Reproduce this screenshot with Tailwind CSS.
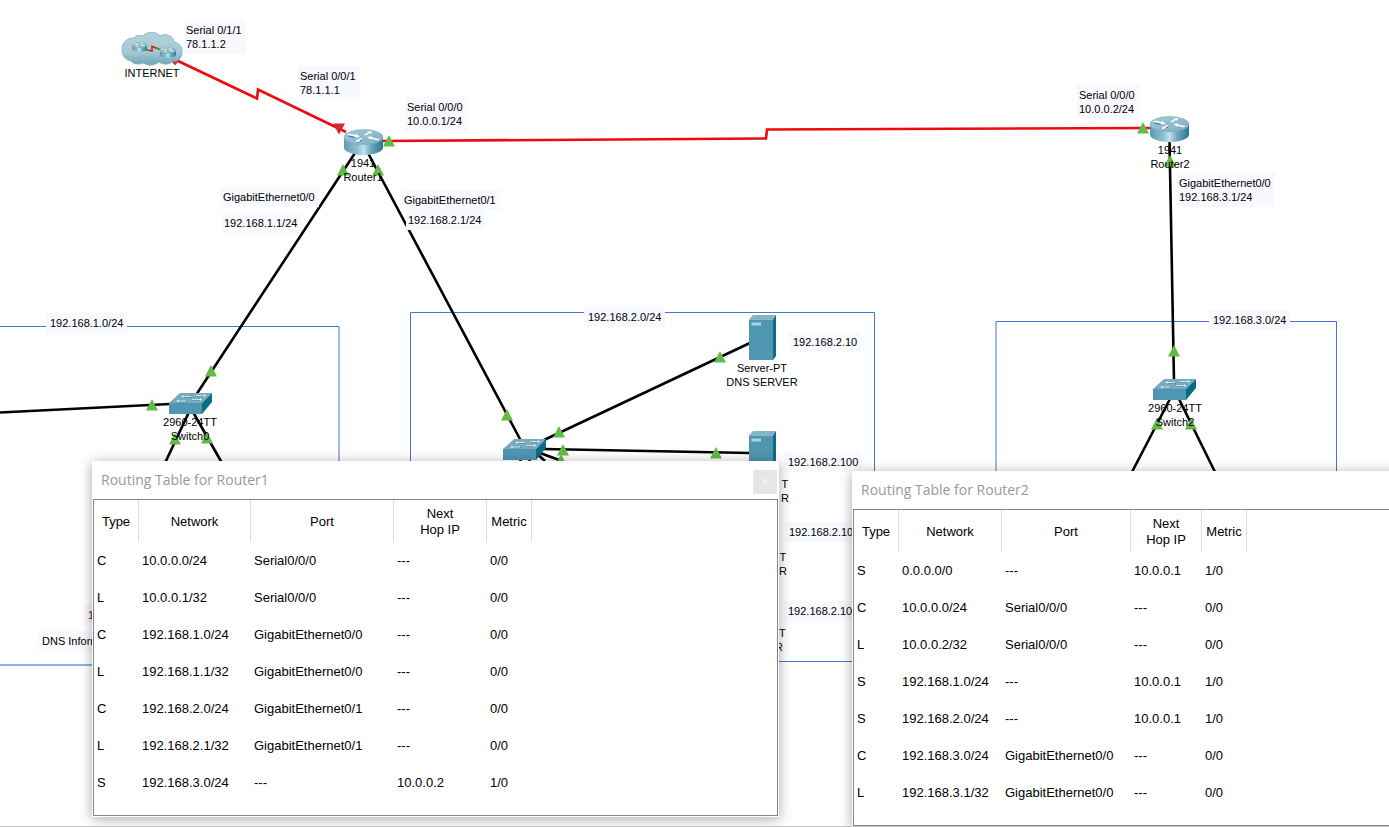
<!DOCTYPE html>
<html lang="en">
<head>
<meta charset="utf-8">
<title>Network topology</title>
<script src="https://cdn.jsdelivr.net/npm/@tailwindcss/browser@4"></script>
</head>
<body class="bg-white text-black font-['Liberation_Sans',Arial,sans-serif]">
<main class="relative h-screen w-full overflow-hidden border-b border-[#c4c4c4] text-[11px] leading-[14px] whitespace-nowrap">

  <svg class="absolute inset-0 h-full w-full" aria-hidden="true">
    <defs>
      <linearGradient id="side" x1="0" x2="1" y1="0" y2="0">
        <stop offset="0" stop-color="#5b9ab1"/><stop offset=".35" stop-color="#8fc0d0"/><stop offset=".5" stop-color="#c3e1e9"/><stop offset=".7" stop-color="#6ba6ba"/><stop offset="1" stop-color="#2c7690"/>
      </linearGradient>
      <linearGradient id="lid" x1="0" x2="1" y1="0" y2="1">
        <stop offset="0" stop-color="#a5cbd8"/><stop offset="1" stop-color="#7aaec0"/>
      </linearGradient>
      <linearGradient id="puff" x1="0" x2="0" y1="0" y2="1">
        <stop offset="0" stop-color="#b3d3dc"/><stop offset=".6" stop-color="#a3c9d4"/><stop offset="1" stop-color="#6fa5b7"/>
      </linearGradient>
      <symbol id="router" viewBox="0 0 40 27" overflow="visible">
        <path d="M0 8v11c0 4 9 7.500 20 7.500s20-3.500 20-7.500V8z" fill="url(#side)"/>
        <ellipse cx="20" cy="8" rx="20" ry="7.800" fill="url(#lid)" stroke="#79abbc" stroke-width=".6"/>
        <g fill="none" stroke="#2f7288" stroke-width="1" transform="translate(.6 .9)">
          <path d="M4 6l8 1.500M22 5l5-3M18 10l-5 2.500M36 10l-9-1.500"/>
        </g>
        <g fill="#fff">
          <path d="M3 5.500l2-1.200 7 1.400.6-1.200 3.600 3-5.400 1 .6-1.100z"/>
          <path d="M20.500 5.600l4.200-2.400-1.200-.6 5.400-1-1 3-1.200-.7-4 2.500z"/>
          <path d="M19 9.600l-3.200 2 1.200.7-5 .9.900-2.800 1.200.6 3-2z"/>
          <path d="M37 10.200l-2 1.200-7-1.600-.5 1-3.700-3 5.400-.8-.6 1z"/>
        </g>
      </symbol>
      <symbol id="switch" viewBox="0 0 43 21">
        <path d="M0 10L11 0h32L33 10z" fill="#78abbd"/>
        <path d="M0 10h33v11H0z" fill="#4f97b0"/>
        <path d="M33 10L43 0v9L33 21z" fill="#0b6c84"/>
        <g fill="none" stroke="#4d8aa1" stroke-width=".7"><path d="M14 4.500h9M9 8.800h10M28 3h8M23 7h9"/></g>
        <g fill="none" stroke="#e6f3f7" stroke-width=".8"><path d="M14 3.500h8M27 2.500h8M9 8h8M23 6.500h8"/></g>
        <path d="M12.500 3.500l2-1.300v2.600zM7.500 8l2-1.300v2.600zM37 2.500l-2-1.300v2.600zM33 6.500l-2-1.300v2.600z" fill="#fff"/>
      </symbol>
      <symbol id="server" viewBox="0 0 27 45">
        <path d="M0 4.500L4 0h23l-3 4.500z" fill="#83b5c5"/>
        <path d="M0 4.500h24V45H0z" fill="#4f97b0"/>
        <path d="M24 4.500L27 0v41l-3 4z" fill="#0b6c84"/>
        <path d="M2.500 7.500h9.500v3H2.500z" fill="#a9d4e2"/>
      </symbol>
      <path id="up" d="M0 -6L6 5.500H-6z" fill="#62bb46"/>
    </defs>

    <!-- subnet frames -->
    <g fill="none" stroke="#4377d6">
      <path d="M0 326.500H339V665"/>
      <path d="M0 665H339" stroke="#8caeea" stroke-width="2"/>
      <path d="M410.500 312.500H874.500V661.500H410.500z"/>
      <path d="M996 321.500H1336.500V661.500H996z"/>
    </g>

    <!-- copper links -->
    <g fill="none" stroke="#000" stroke-width="2.600">
      <path d="M355 153L196 395M368 153L521 441M0 412.500L170 404M189 412L165 463M193 412L222 463"/>
      <path d="M544 440L750 343M544 449L750 453M540 453L562 461M536 453L545 461M521 460L517 466M529 460L533 466"/>
      <path d="M1169.500 141L1174 381M1171 397L1132 472M1178 397L1215 472"/>
    </g>
    <!-- serial links -->
    <g fill="none" stroke="#ee0a0f" stroke-width="2.600">
      <path d="M176 60L257 98.500L258 89.500L346 132"/>
      <path d="M382 141L766 138.500L767 129.500L1151 128"/>
    </g>
    <path d="M333 123.500h12l-6 11zM170 59.500h10l-5 6z" fill="#cf2a36"/>
    <g>
      <use href="#up" x="389" y="141"/><use href="#up" x="343" y="170"/><use href="#up" x="378" y="170"/>
      <use href="#up" x="211" y="371"/><use href="#up" x="152" y="405"/><use href="#up" x="175" y="439"/><use href="#up" x="207" y="438"/>
      <use href="#up" x="507" y="415"/><use href="#up" x="559" y="432"/><use href="#up" x="561" y="460"/><use href="#up" x="563" y="450"/>
      <use href="#up" x="720" y="357"/><use href="#up" x="716" y="453"/>
      <use href="#up" x="1143" y="128"/><use href="#up" x="1170" y="161"/><use href="#up" x="1174" y="351"/>
      <use href="#up" x="1157" y="424"/><use href="#up" x="1191" y="424"/>
    </g>

    <!-- devices -->
    <use href="#router" x="344" y="129" width="39" height="27"/>
    <use href="#router" x="1150" y="116" width="39" height="27"/>
    <use href="#switch" x="169" y="393" width="43" height="21"/>
    <use href="#switch" x="503" y="439" width="43" height="21"/>
    <use href="#switch" x="1153" y="379" width="43" height="21"/>
    <use href="#server" x="749" y="315" width="27" height="45"/>
    <use href="#server" x="749" y="431" width="27" height="45"/>
    <path d="M131 61c-6-1-9-6-9-11c0-8 5-12 12-12c2-3 6-3 9-2c4-5 14-5 17 0c6-4 14 1 14 6c5 1 9 5 8 10c0 6-4 10-9 9c-3 4-10 4-14 1c-5 4-12 4-15 1c-6 2-11 1-13-2z" fill="url(#puff)" stroke="#7fb0c0" stroke-width=".8"/>
    <path d="M143 49l9 2v-4.500l8 3" fill="none" stroke="#f01212" stroke-width="1.600"/>
    <path d="M145 49.500l4 1M156 47.500l4 2" stroke="#3fa53b" stroke-width="1.600"/>
    <use href="#router" x="132" y="42" width="15" height="10"/>
    <use href="#router" x="160" y="47" width="16" height="11"/>
  </svg>

  <!-- device captions -->
  <div class="text-center">
    <p class="absolute left-[152px] top-[66px] -translate-x-1/2">INTERNET</p>
    <p class="absolute left-[363px] top-[156px] -translate-x-1/2">1941<br>Router1</p>
    <p class="absolute left-[1170px] top-[143px] -translate-x-1/2">1941<br>Router2</p>
    <p class="absolute left-[190px] top-[415px] -translate-x-1/2">2960-24TT<br>Switch0</p>
    <p class="absolute left-[1175px] top-[401px] -translate-x-1/2">2960-24TT<br>Switch2</p>
    <p class="absolute left-[762px] top-[361px] -translate-x-1/2">Server-PT<br>DNS SERVER</p>
    <p class="absolute left-[781px] top-[477px]">T<br>R</p>
    <p class="absolute left-[779px] top-[550px]">T<br>R</p>
    <p class="absolute left-[779px] top-[626px]">T</p>
    <p class="absolute left-[775px] top-[640px]">R</p>
  </div>

  <!-- notes -->
  <div class="*:absolute *:bg-[#f8f8ff] *:py-[3px] *:pr-1 *:pl-0.5">
    <p class="left-[184px] top-[20px]">Serial 0/1/1<br>78.1.1.2</p>
    <p class="left-[298px] top-[66px]">Serial 0/0/1<br>78.1.1.1</p>
    <p class="left-[405px] top-[97px]">Serial 0/0/0<br>10.0.0.1/24</p>
    <p class="left-[1077px] top-[85px]">Serial 0/0/0<br>10.0.0.2/24</p>
    <p class="left-[221px] top-[187px]">GigabitEthernet0/0</p>
    <p class="left-[222px] top-[213px]">192.168.1.1/24</p>
    <p class="left-[402px] top-[190px]">GigabitEthernet0/1</p>
    <p class="left-[406px] top-[210px]">192.168.2.1/24</p>
    <p class="left-[1177px] top-[173px]">GigabitEthernet0/0<br>192.168.3.1/24</p>
  </div>
  <div class="*:absolute *:bg-[#f8f8ff] *:py-[3px] *:px-1">
    <p class="left-[46px] top-[313px]">192.168.1.0/24</p>
    <p class="left-[584px] top-[307px]">192.168.2.0/24</p>
    <p class="left-[1209px] top-[310px]">192.168.3.0/24</p>
    <p class="left-[789px] top-[332px]">192.168.2.10</p>
    <p class="left-[784px] top-[452px]">192.168.2.100</p>
    <p class="left-[785px] top-[522px]">192.168.2.10</p>
    <p class="left-[784px] top-[601px]">192.168.2.10</p>
    <p class="left-[84px] top-[605px] text-[#7a1020]">1</p>
    <p class="left-[38px] top-[631px]">DNS Inform</p>
  </div>

  <!-- Router1 window -->
  <section aria-labelledby="t1" class="absolute left-[92px] top-[461px] w-[687px] bg-white pr-px pb-px pl-px text-[13px] leading-4 shadow-[0_2px_12px_rgba(0,0,0,0.35)]">
    <header class="flex h-[38px] items-center justify-between pr-px pl-2">
      <h2 id="t1" class="font-['Open_Sans','Noto_Sans',sans-serif] text-[14px] leading-5 text-[#999]">Routing Table for Router1</h2>
      <button type="button" aria-label="Close" class="mt-1 flex size-6 items-center justify-center bg-[#e5e5e5]">
        <svg viewBox="0 0 8 8" class="size-2" fill="none" stroke="#f8f8f8"><path d="M.5 .5l7 7M7.500 .5l-7 7"/></svg>
      </button>
    </header>
    <div class="border border-[#858585] pb-3.5">
      <table class="w-[438px] table-fixed border-separate border-spacing-0">
        <thead>
          <tr class="h-[42px] *:border-r *:border-[#dedede] *:p-0 *:pt-0.5 *:font-normal">
            <th class="w-[45px]">Type</th><th class="w-[112px]">Network</th><th class="w-[143px]">Port</th><th class="w-[93px]">Next<br>Hop IP</th><th class="w-[45px]">Metric</th>
          </tr>
        </thead>
        <tbody class="[&_td]:h-[37px] [&_td]:p-0 [&_td]:pl-[3px]">
          <tr><td>C</td><td>10.0.0.0/24</td><td>Serial0/0/0</td><td>---</td><td>0/0</td></tr>
          <tr><td>L</td><td>10.0.0.1/32</td><td>Serial0/0/0</td><td>---</td><td>0/0</td></tr>
          <tr><td>C</td><td>192.168.1.0/24</td><td>GigabitEthernet0/0</td><td>---</td><td>0/0</td></tr>
          <tr><td>L</td><td>192.168.1.1/32</td><td>GigabitEthernet0/0</td><td>---</td><td>0/0</td></tr>
          <tr><td>C</td><td>192.168.2.0/24</td><td>GigabitEthernet0/1</td><td>---</td><td>0/0</td></tr>
          <tr><td>L</td><td>192.168.2.1/32</td><td>GigabitEthernet0/1</td><td>---</td><td>0/0</td></tr>
          <tr><td>S</td><td>192.168.3.0/24</td><td>---</td><td>10.0.0.2</td><td>1/0</td></tr>
        </tbody>
      </table>
    </div>
  </section>

  <!-- Router2 window, running past the right edge -->
  <section aria-labelledby="t2" class="absolute top-[471px] -right-4 left-[852px] bg-white pr-px pb-px pl-px text-[13px] leading-4 shadow-[0_2px_12px_rgba(0,0,0,0.35)]">
    <header class="flex h-[38px] items-center pl-2">
      <h2 id="t2" class="font-['Open_Sans','Noto_Sans',sans-serif] text-[14px] leading-5 text-[#999]">Routing Table for Router2</h2>
    </header>
    <div class="border border-[#858585] pb-3.5">
      <table class="w-[393px] table-fixed border-separate border-spacing-0">
        <thead>
          <tr class="h-[42px] *:border-r *:border-[#dedede] *:p-0 *:pt-0.5 *:font-normal">
            <th class="w-[45px]">Type</th><th class="w-[103px]">Network</th><th class="w-[129px]">Port</th><th class="w-[71px]">Next<br>Hop IP</th><th class="w-[45px]">Metric</th>
          </tr>
        </thead>
        <tbody class="[&_td]:h-[37px] [&_td]:p-0 [&_td]:pl-[3px]">
          <tr><td>S</td><td>0.0.0.0/0</td><td>---</td><td>10.0.0.1</td><td>1/0</td></tr>
          <tr><td>C</td><td>10.0.0.0/24</td><td>Serial0/0/0</td><td>---</td><td>0/0</td></tr>
          <tr><td>L</td><td>10.0.0.2/32</td><td>Serial0/0/0</td><td>---</td><td>0/0</td></tr>
          <tr><td>S</td><td>192.168.1.0/24</td><td>---</td><td>10.0.0.1</td><td>1/0</td></tr>
          <tr><td>S</td><td>192.168.2.0/24</td><td>---</td><td>10.0.0.1</td><td>1/0</td></tr>
          <tr><td>C</td><td>192.168.3.0/24</td><td>GigabitEthernet0/0</td><td>---</td><td>0/0</td></tr>
          <tr><td>L</td><td>192.168.3.1/32</td><td>GigabitEthernet0/0</td><td>---</td><td>0/0</td></tr>
        </tbody>
      </table>
    </div>
  </section>
</main>
</body>
</html>
